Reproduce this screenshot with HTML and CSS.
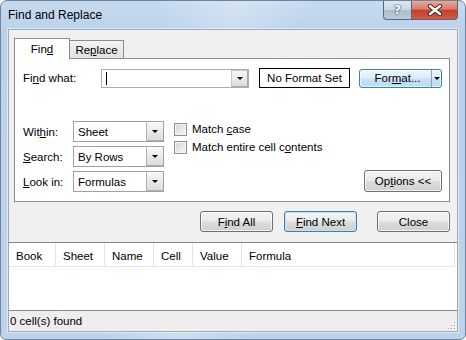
FILE: index.html
```html
<!DOCTYPE html>
<html lang="en">
<head>
<meta charset="UTF-8">
<title>Find and Replace</title>
<link rel="stylesheet" href="styles.css">
</head>
<body>

<div class="window">
    <div class="titlebar">
        <span class="title">Find and Replace</span>
        <div class="caption-btns">
            <span class="cap-btn help"><span>?</span></span>
            <span class="cap-btn close">
                <svg width="16" height="12" viewBox="0 0 16 12">
                    <path d="M3 2 L13 10 M13 2 L3 10" stroke="#4a2620" stroke-width="4.4" stroke-linecap="round" fill="none"/>
                    <path d="M3 2 L13 10 M13 2 L3 10" stroke="#fff" stroke-width="2.4" stroke-linecap="round" fill="none"/>
                </svg>
            </span>
        </div>
    </div>

    <div class="client">
        <div class="tabs-area">
            <div class="tabs">
                <div class="tab active">Fin<u>d</u></div>
                <div class="tab replace">Re<u>p</u>lace</div>
            </div>

            <!-- Find tab page -->
            <div class="panel">
                <div class="find-row">
                    <span class="lbl lbl-find">Fi<u>n</u>d what:</span>
                    <div class="combo">
                        <span class="caret"></span>
                        <span class="drop"><i class="arrow"></i></span>
                    </div>
                    <div class="fmt-box">No Format Set</div>
                    <div class="btn blue split">
                        <span class="split-main">For<u>m</u>at...</span>
                        <span class="split-arrow"><i class="arrow"></i></span>
                    </div>
                </div>

                <div class="opts">
                    <div class="selects">
                        <div class="sel-row">
                            <span class="lbl lbl-sel">Wit<u>h</u>in:</span>
                            <div class="select"><span class="sel-val">Sheet</span><span class="drop"><i class="arrow"></i></span></div>
                        </div>
                        <div class="sel-row">
                            <span class="lbl lbl-sel"><u>S</u>earch:</span>
                            <div class="select"><span class="sel-val">By Rows</span><span class="drop"><i class="arrow"></i></span></div>
                        </div>
                        <div class="sel-row">
                            <span class="lbl lbl-sel"><u>L</u>ook in:</span>
                            <div class="select"><span class="sel-val">Formulas</span><span class="drop"><i class="arrow"></i></span></div>
                        </div>
                    </div>

                    <div class="checks">
                        <div class="check"><span class="box"></span><span>Match <u>c</u>ase</span></div>
                        <div class="check"><span class="box"></span><span>Match entire cell c<u>o</u>ntents</span></div>
                    </div>

                    <div class="opt-btn-wrap">
                        <div class="btn options"><span>Op<u>t</u>ions &lt;&lt;</span></div>
                    </div>
                </div>
            </div>
        </div>

        <div class="actions">
            <div class="btn act find-all"><span>F<u>i</u>nd All</span></div>
            <div class="btn act find-next focus"><span><u>F</u>ind Next</span></div>
            <div class="btn act"><span>Close</span></div>
        </div>

        <div class="results">
            <div class="res-head">
                <span class="col c-book">Book</span>
                <span class="col c-sheet">Sheet</span>
                <span class="col c-name">Name</span>
                <span class="col c-cell">Cell</span>
                <span class="col c-value">Value</span>
                <span class="col c-formula">Formula</span>
            </div>
            <div class="res-body"></div>
        </div>

        <div class="status">
            <span>0 cell(s) found</span>
            <svg class="grip" width="8" height="8" viewBox="0 0 8 8">
                <rect x="6" y="0" width="1" height="1" fill="#a3a3a3"/>
                <rect x="3" y="3" width="1" height="1" fill="#a3a3a3"/>
                <rect x="6" y="3" width="1" height="1" fill="#a3a3a3"/>
                <rect x="0" y="6" width="1" height="1" fill="#a3a3a3"/>
                <rect x="3" y="6" width="1" height="1" fill="#a3a3a3"/>
                <rect x="6" y="6" width="1" height="1" fill="#a3a3a3"/>
                <rect x="7" y="1" width="1" height="1" fill="#fff"/>
                <rect x="4" y="4" width="1" height="1" fill="#fff"/>
                <rect x="7" y="4" width="1" height="1" fill="#fff"/>
                <rect x="1" y="7" width="1" height="1" fill="#fff"/>
                <rect x="4" y="7" width="1" height="1" fill="#fff"/>
                <rect x="7" y="7" width="1" height="1" fill="#fff"/>
            </svg>
        </div>
    </div>
</div>

</body>
</html>
```

FILE: styles.css
```css
:root {
    --tab-border: #898c95;
    --btn-border: #707070;
    --blue-border: #3c7fb1;
    --frame: #bcd3eb;
}

* {
    margin: 0; padding: 0;
    box-sizing: border-box;
}

body {
    width: 466px;
    height: 340px;
    overflow: hidden;
    font-family: 'Liberation Sans', Arial, sans-serif;
    font-size: 11.5px;
    color: #000;
    background: #fff;
}

u {
    text-underline-offset: 1px;
}

/* window frame */
.window {
    width: 466px;
    height: 340px;
    border: 1px solid #6f839c;
    border-radius: 7px 7px 6px 6px;
    background:
        linear-gradient(100deg, rgba(255,255,255,0) 30%, rgba(255,255,255,0.25) 45%, rgba(255,255,255,0) 60%),
        linear-gradient(to bottom, #c7dbef 0, #bad1ea 30px, var(--frame) 100%);
    padding: 0 7px 7px;
    display: flex;
    flex-direction: column;
}

.titlebar {
    height: 28px;
    display: flex;
    align-items: flex-start;
}

.title {
    padding-top: 7px;
    font-size: 12px;
    line-height: 14px;
    color: #000;
}

.caption-btns {
    margin-left: auto;
    display: flex;
}

.cap-btn {
    height: 19px;
    display: flex;
    align-items: center;
    justify-content: center;
    border: 1px solid #55677d;
    border-top: none;
}

.help {
    width: 28px;
    border-right: none;
    border-radius: 0 0 0 4px;
    background: linear-gradient(#dfe8f1 0, #c8d5e2 48%, #aebdcc 52%, #bccbd9 100%);
    color: #fff;
    font-family: 'DejaVu Sans', sans-serif;
    font-weight: bold;
    font-size: 12px;
    text-shadow: 0 0 2px #2c3a4a, 0 0 1px #2c3a4a;
}

.close {
    width: 47px;
    border-radius: 0 0 4px 0;
    background: linear-gradient(#e9a999 0, #d97a68 45%, #c3402c 52%, #d15b46 100%);
}

/* client area */
.client {
    flex: 1;
    background: #f0f0f0;
    border: 1px solid #9eaab8;
    box-shadow: 0 0 0 1px rgba(255,255,255,0.5);
    display: flex;
    flex-direction: column;
}

.tabs-area {
    padding: 8px 7px 0 5px;
}

.tabs {
    display: flex;
    align-items: flex-end;
    height: 20px;
}

.tab {
    height: 18px;
    border: 1px solid var(--tab-border);
    border-bottom: none;
    background: linear-gradient(#f3f3f3, #e2e2e2);
    text-align: center;
    line-height: 18px;
}

.tab.active {
    width: 56px;
    height: 21px;
    line-height: 21px;
    margin-bottom: -1px;
    background: #fff;
    position: relative;
    z-index: 1;
}

.tab.replace {
    width: 55px;
    margin-left: -1px;
}

.panel {
    background: #fff;
    border: 1px solid var(--tab-border);
    padding: 9px 7px 9px 8px;
}

.find-row {
    display: flex;
    align-items: center;
    height: 20px;
}

.lbl-find { width: 78px; }
.lbl-sel { width: 50px; }

.combo {
    width: 148px;
    height: 19px;
    border: 1px solid #abadb3;
    display: flex;
    justify-content: space-between;
    align-items: center;
}

.caret {
    width: 1px;
    height: 13px;
    background: #000;
    margin-left: 4px;
}

.drop {
    width: 17px;
    height: 100%;
    border-left: 1px solid #b4b4b4;
    background: linear-gradient(#f7f7f7, #dcdcdc);
    display: flex;
    align-items: center;
    justify-content: center;
}

.combo .drop {
    border: 1px solid #c9c9c9;
    border-right-color: #a9a9a9;
    border-bottom-color: #a9a9a9;
}

.arrow {
    width: 0;
    height: 0;
    border-left: 3px solid transparent;
    border-right: 3px solid transparent;
    border-top: 3px solid #000;
}

.fmt-box {
    margin-left: 10px;
    width: 91px;
    height: 20px;
    border: 1px solid #000;
    text-align: center;
    line-height: 18px;
}

/* buttons */
.btn {
    border: 1px solid var(--btn-border);
    border-radius: 3px;
    background: linear-gradient(#f2f2f2 0, #ebebeb 48%, #dddddd 52%, #cfcfcf 100%);
    box-shadow: inset 0 0 0 1px rgba(255,255,255,0.75);
    text-align: center;
    display: flex;
    align-items: center;
    justify-content: center;
}

.btn.blue {
    border-color: var(--blue-border);
    background: linear-gradient(#ecf5fc 0, #dcedfa 48%, #c4e0f6 52%, #bcdcf4 100%);
    box-shadow: inset 0 0 0 1px rgba(255,255,255,0.6);
}

.split {
    margin-left: 9px;
    width: 83px;
    height: 19px;
    justify-content: space-between;
}

.split-main {
    flex: 1;
    padding-left: 4px;
}

.split-arrow {
    width: 10px;
    height: 100%;
    border-left: 1px solid #7fa9cc;
    display: flex;
    align-items: center;
    justify-content: center;
}

.opts {
    margin-top: 33px;
    display: flex;
}

.selects {
    display: flex;
    flex-direction: column;
    gap: 4px;
}

.sel-row {
    display: flex;
    align-items: center;
}

.select {
    width: 91px;
    height: 21px;
    border: 1px solid #a0a0a0;
    display: flex;
    align-items: center;
    justify-content: space-between;
}

.sel-val {
    padding-left: 4px;
}

.select .drop {
    width: 17px;
    height: 19px;
    border: 1px solid #b0b0b0;
    border-top-color: #fff;
    border-right: none;
}

.checks {
    margin-left: 10px;
    padding-top: 2px;
    display: flex;
    flex-direction: column;
    gap: 5px;
}

.check {
    display: flex;
    align-items: center;
    gap: 5px;
    height: 13px;
    line-height: 13px;
}

.box {
    width: 13px;
    height: 13px;
    border: 1px solid #8e8f8f;
    background: linear-gradient(135deg, #d6d6d6, #f8f8f8);
    box-shadow: inset 0 0 0 1px #f4f4f4;
}

.opt-btn-wrap {
    flex: 1;
    display: flex;
    justify-content: flex-end;
    align-items: flex-end;
}

.options {
    width: 78px;
    height: 22px;
}

.actions {
    margin-top: 9px;
    padding-right: 7px;
    display: flex;
    justify-content: flex-end;
}

.act {
    width: 73px;
    height: 21px;
}

.find-all { margin-right: 11px; }
.find-next { margin-right: 20px; }

.btn.focus {
    border-color: var(--blue-border);
    box-shadow: inset 0 0 0 1px #bfe2f7;
}

/* results list */
.results {
    margin-top: 10px;
    flex: 1;
    background: #fff;
    border-top: 1px solid #828790;
    border-bottom: 1px solid #828790;
    display: flex;
    flex-direction: column;
}

.res-head {
    height: 24px;
    border-bottom: 1px solid #e5e5e5;
    display: flex;
    margin-right: 2px;
}

.col {
    padding: 3px 0 0 7px;
    border-right: 1px solid #e5e5e5;
    display: flex;
    align-items: center;
}

.c-book { width: 47px; }
.c-sheet { width: 49px; }
.c-name { width: 49px; }
.c-cell { width: 39px; }
.c-value { width: 49px; }
.c-formula { flex: 1; }

.res-body {
    flex: 1;
}

.status {
    height: 20px;
    background: #efeded;
    padding-left: 1px;
    display: flex;
    align-items: center;
}

.grip {
    margin-left: auto;
    margin-right: 1px;
    align-self: flex-end;
    margin-bottom: 1px;
}
```
